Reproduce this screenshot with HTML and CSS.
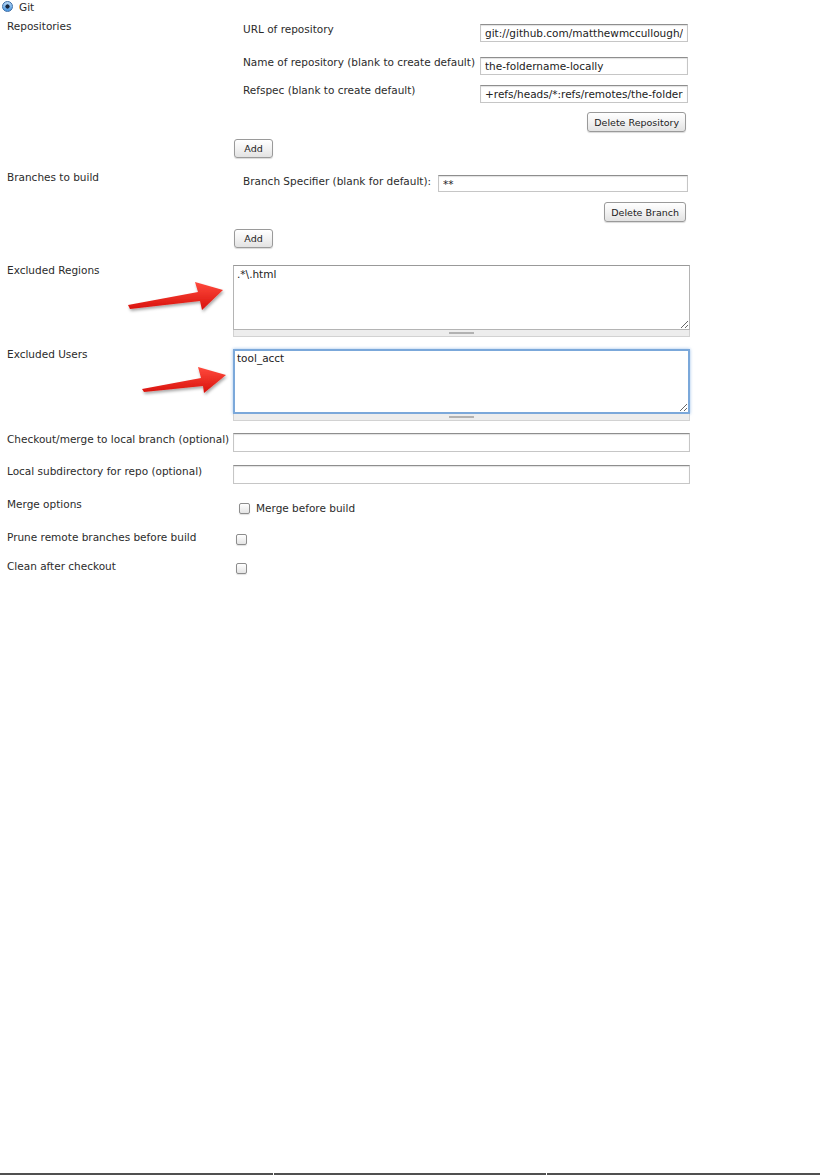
FILE: index.html
```html
<!DOCTYPE html>
<html lang="en">
<head>
  <meta charset="UTF-8">
  <meta name="viewport" content="width=device-width, initial-scale=1.0">
  <title>Git source code management</title>
  <link rel="stylesheet" href="styles.css">
</head>
<body>
  <div class="page">
    <!-- SCM choice -->
    <div class="scm-choice">
      <span class="radio"></span>
      <span>Git</span>
    </div>

    <!-- Repositories -->
    <div class="row row-repos">
      <div class="label">Repositories</div>
      <div class="field">
        <div class="repo">
          <div class="sub">
            <div class="sub-label">URL of repository</div>
            <input type="text" class="text sub-input" value="git://github.com/matthewmccullough/hellogitworld.git">
          </div>
          <div class="sub sub-name">
            <div class="sub-label">Name of repository (blank to create default)</div>
            <input type="text" class="text sub-input" value="the-foldername-locally">
          </div>
          <div class="sub sub-refspec">
            <div class="sub-label">Refspec (blank to create default)</div>
            <input type="text" class="text sub-input" value="+refs/heads/*:refs/remotes/the-foldername-locally/*">
          </div>
          <div class="actions">
            <button type="button" class="btn">Delete Repository</button>
          </div>
        </div>
        <button type="button" class="btn btn-add">Add</button>
      </div>
    </div>

    <!-- Branches -->
    <div class="row row-branches">
      <div class="label">Branches to build</div>
      <div class="field">
        <div class="repo">
          <div class="sub">
            <div class="sub-label branch-label">Branch Specifier (blank for default):</div>
            <input type="text" class="text branch-input" value="**">
          </div>
          <div class="actions actions-branch">
            <button type="button" class="btn">Delete Branch</button>
          </div>
        </div>
        <button type="button" class="btn btn-add">Add</button>
      </div>
    </div>

    <!-- Excluded regions / users -->
    <div class="row row-regions">
      <div class="label">Excluded Regions</div>
      <div class="field field-area">
        <textarea class="area">.*\.html</textarea>
        <div class="grip"></div>
      </div>
    </div>

    <div class="row row-users">
      <div class="label">Excluded Users</div>
      <div class="field field-area">
        <textarea class="area area-focus">tool_acct</textarea>
        <div class="grip"></div>
      </div>
    </div>

    <div class="row row-checkout">
      <div class="label">Checkout/merge to local branch (optional)</div>
      <div class="field">
        <input type="text" class="text wide-input">
      </div>
    </div>

    <div class="row row-local">
      <div class="label">Local subdirectory for repo (optional)</div>
      <div class="field">
        <input type="text" class="text wide-input">
      </div>
    </div>

    <div class="row row-merge">
      <div class="label">Merge options</div>
      <div class="field field-check">
        <label class="check-line">
          <input type="checkbox" class="check check-merge">
          <span>Merge before build</span>
        </label>
      </div>
    </div>

    <div class="row row-prune">
      <div class="label">Prune remote branches before build</div>
      <div class="field field-check">
        <input type="checkbox" class="check check-plain">
      </div>
    </div>

    <div class="row row-clean">
      <div class="label">Clean after checkout</div>
      <div class="field field-check">
        <input type="checkbox" class="check check-plain">
      </div>
    </div>

    <!-- annotation arrows -->
    <svg class="arrows" width="820" height="600" viewBox="0 0 820 600">
      <defs>
        <linearGradient id="red" x1="0" y1="0" x2="0" y2="1">
          <stop offset="0" stop-color="#ff4a3d"/>
          <stop offset="1" stop-color="#d8120c"/>
        </linearGradient>
        <filter id="shadow" x="-20%" y="-50%" width="140%" height="200%">
          <feDropShadow dx="1" dy="2" stdDeviation="1.5" flood-color="#000" flood-opacity="0.35"/>
        </filter>
      </defs>
      <polygon points="128,305 198,292 195,282 223,290 202,310 200,301 130,309" fill="url(#red)" filter="url(#shadow)"/>
      <polygon points="142,389 201,378 198,367 226,375 204,393 203,386 144,392" fill="url(#red)" filter="url(#shadow)"/>
    </svg>
  </div>

  <div class="status">
    <span></span>
    <span></span>
    <span></span>
  </div>
</body>
</html>
```

FILE: styles.css
```css
/* General */
body {
  margin: 0;
  min-height: 100vh;
  display: flex;
  flex-direction: column;
  font-family: "DejaVu Sans", Verdana, sans-serif;
  font-size: 10.5px;
  color: #2b2b2b;
  background-color: #ffffff;
}

.page {
  position: relative;
}

/* SCM radio */
.scm-choice {
  display: flex;
  align-items: center;
  gap: 6px;
  height: 13px;
  padding-left: 2px;
}

.radio {
  width: 11px;
  height: 11px;
  box-sizing: border-box;
  border-radius: 50%;
  border: 1px solid #3d6ea6;
  background: radial-gradient(circle, #17263d 0 1.8px, transparent 2.4px),
              linear-gradient(#b8d8f5, #4a97e2);
}

/* Rows */
.row {
  display: flex;
  align-items: flex-start;
}

.label {
  width: 226px;
  padding-left: 7px;
  line-height: 14px;
  white-space: nowrap;
}

.field {
  width: 457px;
}

/* Text inputs */
.text {
  box-sizing: border-box;
  height: 18px;
  margin: 0;
  padding: 0 4px;
  border: 1px solid #c6c6c6;
  border-top-color: #8e8e8e;
  border-radius: 0;
  box-shadow: inset 0 1px 1px rgba(0, 0, 0, 0.12);
  font-family: "DejaVu Sans", Verdana, sans-serif;
  font-size: 10.5px;
  color: #222;
  background: #fff;
}

/* Buttons */
.btn {
  height: 20px;
  padding: 0 6px;
  border: 1px solid #9a9a9a;
  border-radius: 3px;
  background: linear-gradient(#ffffff, #f2f2f2 50%, #e2e2e2);
  box-shadow: 0 1px 1px rgba(0, 0, 0, 0.15);
  font-family: "DejaVu Sans", Verdana, sans-serif;
  font-size: 9.5px;
  color: #222;
}

.btn-add {
  display: block;
  width: 39px;
  height: 19px;
  margin-top: 7px;
  margin-left: 1px;
  padding: 0;
}

/* Nested repository block */
.row-repos {
  margin-top: 6px;
}

.row-repos .field {
  padding-top: 3px;
}

.repo {
  width: 445px;
  margin-left: 10px;
}

.sub {
  display: flex;
  align-items: flex-start;
  line-height: 14px;
}

.sub-label {
  width: 237px;
  white-space: nowrap;
}

.sub-input {
  width: 208px;
  margin-top: 2px;
}

.sub-name {
  margin-top: 13px;
}

.sub-refspec {
  margin-top: 8px;
}

.actions {
  display: flex;
  justify-content: flex-end;
  margin-top: 9px;
  margin-right: 2px;
}

/* Branches */
.row-branches {
  margin-top: 12px;
}

.row-branches .field {
  padding-top: 4px;
}

.branch-label {
  width: 195px;
}

.branch-input {
  width: 250px;
  height: 17px;
  margin-top: 1px;
}

.actions-branch {
  margin-top: 10px;
}

/* Textareas */
.row-regions {
  margin-top: 15px;
}

.row-users {
  margin-top: 10px;
}

.field-area {
  padding-top: 2px;
}

.area {
  display: block;
  box-sizing: border-box;
  width: 457px;
  height: 65px;
  margin: 0;
  padding: 2px 3px;
  border: 1px solid #b4b4b4;
  border-top-color: #999;
  font-family: "DejaVu Sans", Verdana, sans-serif;
  font-size: 10.5px;
  color: #222;
  outline: none;
}

.area-focus {
  border: 2px solid #7ba8da;
  padding: 1px 2px;
  box-shadow: 0 0 3px rgba(90, 150, 220, 0.6);
}

.grip {
  box-sizing: border-box;
  width: 457px;
  height: 7px;
  display: flex;
  align-items: center;
  justify-content: center;
  background-color: #ededed;
  border: 1px solid #d2d2d2;
  border-top: none;
}

.grip::after {
  content: "";
  width: 25px;
  height: 2px;
  background-color: #b2b2b2;
}

/* Wide inputs */
.row-checkout {
  margin-top: 11px;
}

.row-local {
  margin-top: 12px;
}

.wide-input {
  width: 457px;
  height: 19px;
  margin-top: 1px;
}

/* Checkboxes */
.row-merge {
  margin-top: 13px;
}

.row-prune {
  margin-top: 15px;
}

.row-clean {
  margin-top: 14px;
}

.field-check {
  padding-top: 4px;
}

.check-line {
  display: flex;
  align-items: center;
  height: 14px;
  gap: 6px;
}

.check {
  appearance: none;
  box-sizing: border-box;
  width: 11px;
  height: 11px;
  margin: 0;
  border: 1px solid #8d8d8d;
  border-radius: 2px;
  background: linear-gradient(#ffffff, #e4e4e4);
  box-shadow: 0 1px 1px rgba(0, 0, 0, 0.12);
}

.check-merge {
  margin-left: 6px;
}

.check-plain {
  display: block;
  margin-left: 3px;
}

/* Annotation arrows */
.arrows {
  position: absolute;
  top: 0;
  left: 0;
  pointer-events: none;
}

/* Bottom status strip */
.status {
  margin-top: auto;
  display: flex;
  gap: 1px;
  height: 2px;
}

.status span {
  flex: 1;
  background-color: #505050;
}
```
